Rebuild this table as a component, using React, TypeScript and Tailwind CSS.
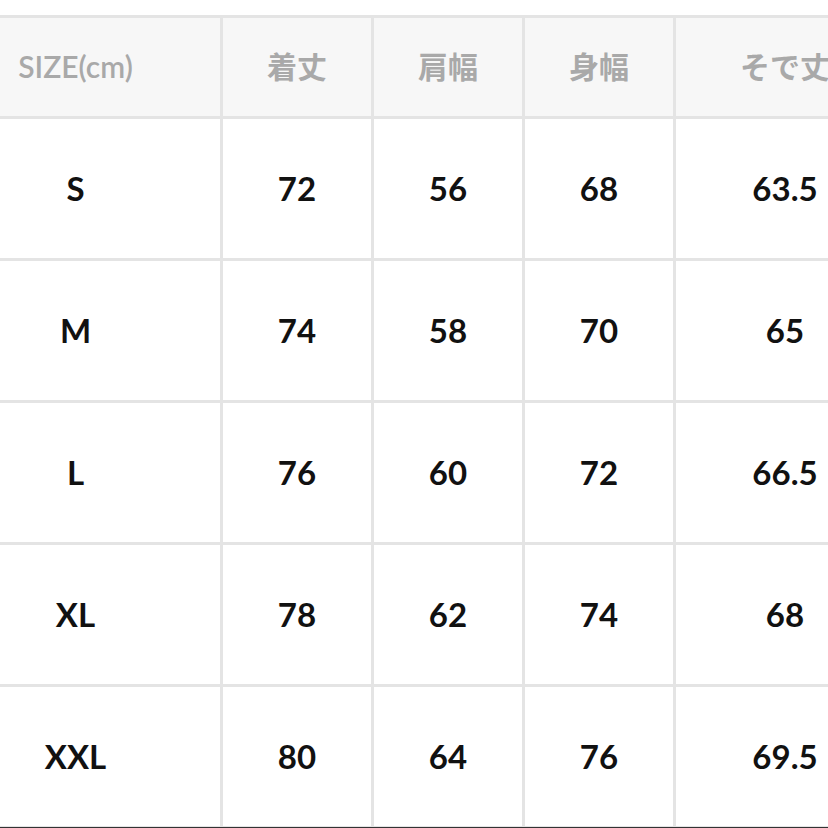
const header = ["SIZE(cm)", "着丈", "肩幅", "身幅", "そで丈"];

const rows = [
  ["S", "72", "56", "68", "63.5"],
  ["M", "74", "58", "70", "65"],
  ["L", "76", "60", "72", "66.5"],
  ["XL", "78", "62", "74", "68"],
  ["XXL", "80", "64", "76", "69.5"],
];

const font = { fontFamily: "Lato, 'Noto Sans CJK JP', sans-serif" };

export default function App() {
  return (
    <div className="h-[828px] w-[828px] overflow-hidden border-b border-[#333333] bg-white pt-[15px]" style={font}>
      <div className="-ml-[72px] grid w-[966px] grid-cols-[292px_151px_151px_151px_221px] border-t-[3px] border-l-[3px] border-[#e4e4e4]">
        {header.map((h) => (
          <div
            key={h}
            className="flex h-[101px] items-center justify-center border-r-[3px] border-b-[3px] border-[#e4e4e4] bg-[#f7f7f7] pb-[2px] text-[30px] font-semibold text-[#a9a9a9]"
          >
            {h}
          </div>
        ))}
        {rows.map((r) =>
          r.map((c, i) => (
            <div
              key={r[0] + i}
              className="flex h-[142px] items-center justify-center border-r-[3px] border-b-[3px] border-[#e4e4e4] text-[33px] font-bold text-[#111111]"
            >
              {c}
            </div>
          )),
        )}
      </div>
    </div>
  );
}
